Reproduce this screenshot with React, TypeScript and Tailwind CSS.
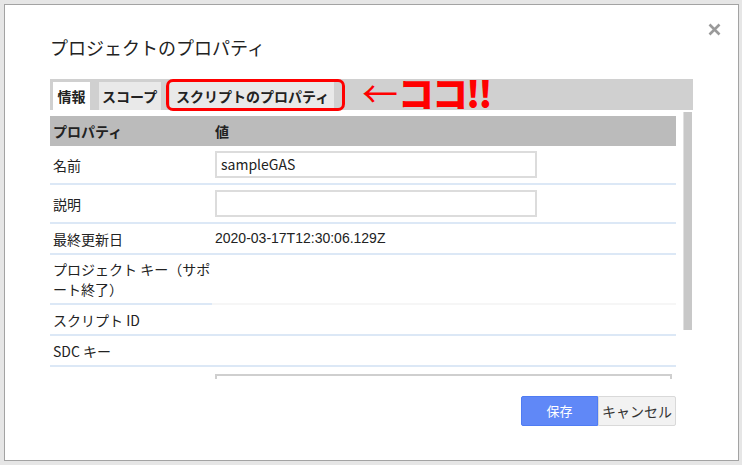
import React from "react";

const rows = [
  { label: "名前", h: "h-[39px]", input: "sampleGAS" },
  { label: "説明", h: "h-[39px]", input: "" },
  { label: "最終更新日", h: "h-[31px]", text: "2020-03-17T12:30:06.129Z" },
  { label: "プロジェクト キー（サポート終了）", h: "h-[50px]", faint: true },
  { label: "スクリプト ID", h: "h-[31px]" },
  { label: "SDC キー", h: "h-[31px]" },
];

export default function App() {
  return (
    <div
      className="w-[742px] h-[465px] bg-[#e6e6e6] pt-[4px] pl-[4px] overflow-hidden"
      style={{ fontFamily: '"Noto Sans CJK JP", "Liberation Sans", sans-serif' }}
    >
      <div className="relative w-[735px] h-[457px] bg-white border border-[#a3a3a3] pl-[45px]">
        {/* close */}
        <svg className="absolute left-[703px] top-[18px]" width="13" height="13" viewBox="0 0 13 13">
          <path d="M1.5 1.5 L11.5 11.5 M11.5 1.5 L1.5 11.5" stroke="#9a9a9a" strokeWidth="2.6" />
        </svg>

        {/* Title */}
        <h1 className="mt-[30px] h-[24px] text-[18px] leading-[24px] text-[#222]">プロジェクトのプロパティ</h1>

        {/* Tabs */}
        <div className="relative mt-[20px] w-[643px] h-[31px] bg-[#d0d0d0] flex items-end pl-[3px] gap-[9px] text-[14px] font-bold text-[#222]">
          <div className="h-[28px] w-[37px] bg-white flex items-center justify-center">情報</div>
          <div className="h-[28px] w-[62px] bg-[#e9e9e9] flex items-center pl-[3px]">スコープ</div>
          <div className="h-[28px] w-[164px] bg-[#e9e9e9] flex items-center pl-[6px]">スクリプトのプロパティ</div>

          {/* annotation */}
          <div className="absolute left-[116px] top-0 w-[179px] h-[32px] border-[3px] border-[#ff0000] rounded-[7px]" />
          <div className="absolute left-[312px] top-[-5px] flex items-center text-[#ff0000] leading-none">
            <span className="text-[36px] font-normal">←</span>
            <span className="text-[36px] font-black tracking-[-2px]">ココ!!</span>
          </div>
        </div>

        {/* Table + scrollbar */}
        <div className="flex h-[269px]">
          <div className="w-[626px] pt-[6px] overflow-hidden text-[14px] text-[#222]">
            <div className="flex h-[30px] bg-[#bbbbbb] font-bold items-center">
              <div className="w-[165px] pl-[3px]">プロパティ</div>
              <div>値</div>
            </div>
            {rows.map((r) => (
              <div key={r.label} className={`flex ${r.h}`}>
                <div className="w-[162px] pl-[3px] border-b-2 border-[#dce8f6] flex items-center leading-[20px]">
                  {r.label}
                </div>
                <div
                  className={`flex-1 pl-[3px] border-b-2 flex items-center ${
                    r.faint ? "border-[#f6f6f6]" : "border-[#dce8f6]"
                  }`}
                >
                  {r.input !== undefined && (
                    <div className="w-[322px] h-[27px] border-2 border-[#dcdcdc] flex items-center pl-[4px]">
                      {r.input}
                    </div>
                  )}
                  {r.text && <span className="font-['Liberation_Sans']">{r.text}</span>}
                </div>
              </div>
            ))}
            <div className="flex h-[40px]">
              <div className="w-[162px]" />
              <div className="flex-1 pl-[3px] pt-[7px]">
                <div className="w-[457px] h-[40px] border-2 border-[#cfcfcf]" />
              </div>
            </div>
          </div>
          <div className="ml-[7px] mt-[2px] w-[9px] h-[218px] bg-[#c8c8c8] border-l border-[#e0e0e0]" />
        </div>

        {/* Buttons */}
        <div className="mt-[17px] w-[626px] flex justify-end">
          <button className="w-[77px] h-[30px] bg-[#6088f7] border border-[#4f7cf3] rounded-l-[2px] text-white text-[13px]">
            保存
          </button>
          <button className="w-[78px] h-[30px] bg-[#f2f2f2] border border-[#d9d9d9] rounded-r-[2px] text-[#333] text-[14px]">
            キャンセル
          </button>
        </div>
      </div>
    </div>
  );
}
